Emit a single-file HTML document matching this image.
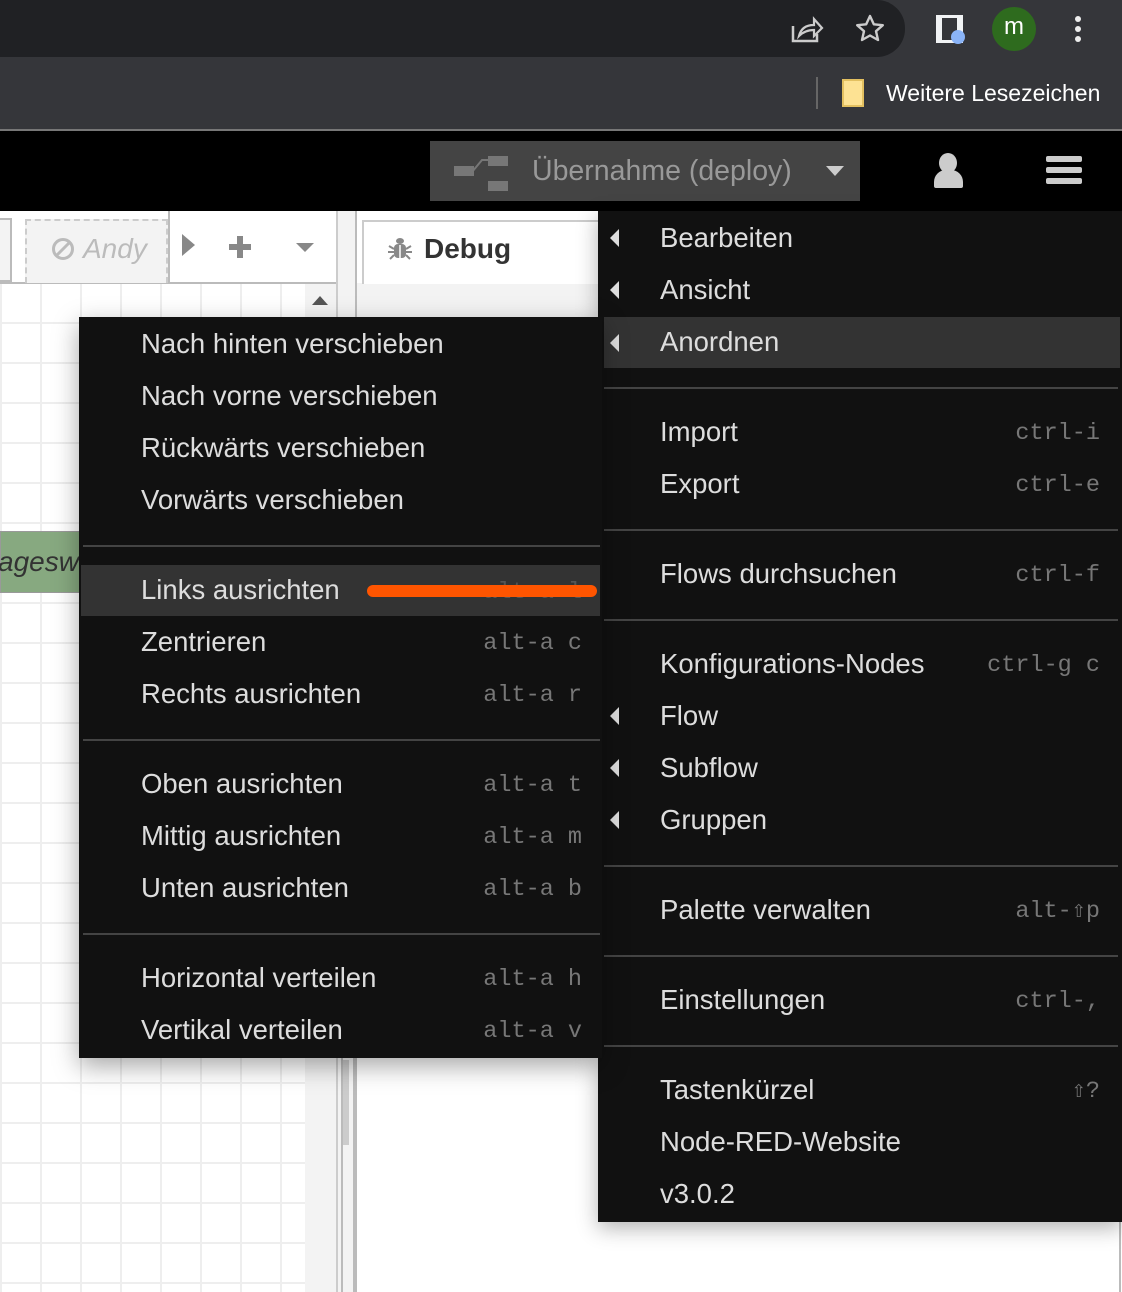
<!DOCTYPE html>
<html><head><meta charset="utf-8"><style>
*{margin:0;padding:0;box-sizing:border-box}
body{width:1122px;height:1292px;overflow:hidden;position:relative;background:#fff;font-family:"Liberation Sans",Arial,sans-serif}
.a{position:absolute}
.menu{position:absolute;background:#111;color:#ddd;font-size:27.5px}
.it{position:absolute;left:0;right:0;height:52px;line-height:52px}
.it .t{position:absolute}
.it .k{position:absolute;top:2px;font-family:"Liberation Mono","DejaVu Sans Mono",monospace;font-size:23.5px;color:#777}
.sep{position:absolute;height:2px;background:#444}
.arr{position:absolute;width:0;height:0;border-top:9px solid transparent;border-bottom:9px solid transparent;border-right:9px solid #ddd;top:17px}
</style></head><body>
<!-- chrome -->
<div class="a" style="left:0;top:0;width:1122px;height:129px;background:#35363a"></div>
<div class="a" style="left:-30px;top:0;width:935px;height:57px;background:#202124;border-radius:0 28px 28px 0"></div>
<svg class="a" style="left:790px;top:14px" width="34" height="30" viewBox="0 0 34 30"><path d="M3 12v15h24v-7" fill="none" stroke="#ccc" stroke-width="2.5"/><path d="M9 22c2-8 8-11 15-11v-6l8 9-8 8v-6c-6 0-11 2-15 6z" fill="none" stroke="#ccc" stroke-width="2.2"/></svg>
<svg class="a" style="left:855px;top:14px" width="30" height="30" viewBox="0 0 30 30"><path d="M15 2l3.8 8.3 9 .9-6.8 6 2 8.8L15 21.5 7 26l2-8.8-6.8-6 9-.9z" fill="none" stroke="#ccc" stroke-width="2.4" stroke-linejoin="round"/></svg>
<div class="a" style="left:936px;top:15px;width:27px;height:28px;background:#f1f3f4"></div>
<div class="a" style="left:942px;top:18px;width:15px;height:22px;background:#35363a"></div>
<div class="a" style="left:951px;top:30px;width:14px;height:14px;border-radius:50%;background:#8ab4f8"></div>
<div class="a" style="left:992px;top:7px;width:44px;height:44px;border-radius:50%;background:#2e6b1e;color:#fff;font-size:24px;text-align:center;line-height:40px">m</div>
<div class="a" style="left:1075px;top:16px;width:6px;height:6px;border-radius:50%;background:#eee;box-shadow:0 10px 0 #eee,0 20px 0 #eee"></div>
<div class="a" style="left:816px;top:77px;width:2px;height:32px;background:#666"></div>
<div class="a" style="left:842px;top:79px;width:22px;height:28px;background:#fde293;border:2px solid #e3c060"></div>
<div class="a" style="left:886px;top:78px;color:#fff;font-size:23px;line-height:30px">Weitere Lesezeichen</div>
<div class="a" style="left:0;top:129px;width:1122px;height:2px;background:#777"></div>
<!-- node-red header -->
<div class="a" style="left:0;top:131px;width:1122px;height:80px;background:#000"></div>
<div class="a" style="left:430px;top:141px;width:430px;height:60px;background:#444"></div>
<div class="a" style="left:454px;top:166px;width:20px;height:10px;background:#777"></div>
<div class="a" style="left:488px;top:156px;width:20px;height:10px;background:#777"></div>
<div class="a" style="left:488px;top:181px;width:20px;height:10px;background:#777"></div>
<svg class="a" style="left:470px;top:158px" width="20" height="20"><path d="M2 14L12 2h6" stroke="#777" stroke-width="2" fill="none"/></svg>
<div class="a" style="left:532px;top:154px;color:#999;font-size:28.5px;line-height:34px">Übernahme (deploy)</div>
<div class="a" style="left:826px;top:166px;border-left:9px solid transparent;border-right:9px solid transparent;border-top:10px solid #ccc"></div>
<div class="a" style="left:939px;top:153px;width:18px;height:20px;border-radius:50%;background:#ccc"></div>
<div class="a" style="left:934px;top:170px;width:29px;height:18px;border-radius:12px 12px 2px 2px;background:#ccc"></div>
<div class="a" style="left:1046px;top:156px;width:36px;height:6px;background:#ccc;border-radius:2px;box-shadow:0 11px 0 #ccc,0 22px 0 #ccc"></div>
<!-- workspace -->
<div class="a" style="left:0;top:211px;width:338px;height:1081px;background:#fff"></div>
<div class="a" style="left:0;top:283px;width:305px;height:1009px;background-color:#fff;background-image:linear-gradient(#eee 2px,transparent 2px),linear-gradient(90deg,#eee 2px,transparent 2px);background-size:40px 40px;background-position:0 -1px"></div>
<div class="a" style="left:0;top:282px;width:338px;height:2px;background:#bbb"></div>
<div class="a" style="left:0;top:218px;width:12px;height:64px;border:2px solid #bbb;border-left:none;background:#f3f3f3"></div>
<div class="a" style="left:25px;top:219px;width:143px;height:64px;border:2px dashed #ccc;border-bottom:none;background:#f3f3f3"></div>
<svg class="a" style="left:51px;top:237px" width="24" height="24"><circle cx="12" cy="12" r="9.5" fill="none" stroke="#bbb" stroke-width="3"/><path d="M6 18L18 6" stroke="#bbb" stroke-width="3"/></svg>
<div class="a" style="left:83px;top:232px;color:#bbb;font-size:28px;font-style:italic;line-height:34px">Andy</div>
<div class="a" style="left:168px;top:211px;width:2px;height:72px;background:#bbb"></div>
<div class="a" style="left:182px;top:234px;border-top:11px solid transparent;border-bottom:11px solid transparent;border-left:13px solid #888"></div>
<div class="a" style="left:229px;top:244px;width:22px;height:6px;background:#888"></div>
<div class="a" style="left:237px;top:236px;width:6px;height:22px;background:#888"></div>
<div class="a" style="left:296px;top:243px;border-left:9px solid transparent;border-right:9px solid transparent;border-top:9px solid #888"></div>
<div class="a" style="left:305px;top:284px;width:32px;height:1008px;background:#f3f3f3"></div>
<div class="a" style="left:312px;top:296px;border-left:8px solid transparent;border-right:8px solid transparent;border-bottom:9px solid #555"></div>
<div class="a" style="left:336px;top:211px;width:2px;height:1081px;background:#ccc"></div>
<div class="a" style="left:338px;top:211px;width:17px;height:1081px;background:#f3f3f3"></div>
<div class="a" style="left:341px;top:1040px;width:14px;height:252px;border-left:2px solid #bbb;border-right:2px solid #bbb"></div>
<div class="a" style="left:343px;top:1060px;width:6px;height:85px;background:#ccc"></div>
<div class="a" style="left:355px;top:211px;width:767px;height:1081px;background:#fff;border-left:2px solid #bbb"></div>
<div class="a" style="left:1119px;top:1222px;width:2px;height:70px;background:#bbb"></div>
<div class="a" style="left:357px;top:283px;width:241px;height:34px;background:#f3f3f3"></div>
<div class="a" style="left:362px;top:220px;width:240px;height:64px;border:2px solid #ccc;border-right:none;border-bottom:none;background:#fff"></div>
<svg class="a" style="left:387px;top:236px" width="26" height="26" viewBox="0 0 26 26"><g fill="#888"><ellipse cx="13" cy="5" rx="4" ry="3"/><rect x="7" y="8" width="12" height="14" rx="4"/></g><g stroke="#888" stroke-width="2"><path d="M2 10l5 3M24 10l-5 3M1 16h6M25 16h-6M3 23l4-4M23 23l-4-4"/></g><path d="M13 9v13" stroke="#fff" stroke-width="1.5"/></svg>
<div class="a" style="left:424px;top:232px;color:#333;font-size:28px;font-weight:bold;line-height:34px">Debug</div>
<div class="a" style="left:0;top:531px;width:80px;height:62px;background:#87a980;border:1px solid #999"></div>
<div class="a" style="left:-2px;top:545px;color:#333;font-size:28px;font-style:italic;line-height:34px">agesw</div>
<!-- main menu -->
<div class="menu" style="left:598px;top:211px;width:524px;height:1011px;box-shadow:0 6px 20px rgba(0,0,0,.3)">
<div class="it" style="top:1px"><i class="arr" style="left:12px"></i><span class="t" style="left:62px">Bearbeiten</span></div>
<div class="it" style="top:53px"><i class="arr" style="left:12px"></i><span class="t" style="left:62px">Ansicht</span></div>
<div class="it" style="top:106px;left:6px;right:2px;height:51px;background:#333"><i class="arr" style="left:6px"></i><span class="t" style="left:56px;top:-1px">Anordnen</span></div>
<div class="sep" style="top:176px;left:6px;right:4px"></div>
<div class="it" style="top:195px"><span class="t" style="left:62px">Import</span><span class="k" style="right:22px">ctrl-i</span></div>
<div class="it" style="top:247px"><span class="t" style="left:62px">Export</span><span class="k" style="right:22px">ctrl-e</span></div>
<div class="sep" style="top:318px;left:6px;right:4px"></div>
<div class="it" style="top:337px"><span class="t" style="left:62px">Flows durchsuchen</span><span class="k" style="right:22px">ctrl-f</span></div>
<div class="sep" style="top:408px;left:6px;right:4px"></div>
<div class="it" style="top:427px"><span class="t" style="left:62px">Konfigurations-Nodes</span><span class="k" style="right:22px">ctrl-g c</span></div>
<div class="it" style="top:479px"><i class="arr" style="left:12px"></i><span class="t" style="left:62px">Flow</span></div>
<div class="it" style="top:531px"><i class="arr" style="left:12px"></i><span class="t" style="left:62px">Subflow</span></div>
<div class="it" style="top:583px"><i class="arr" style="left:12px"></i><span class="t" style="left:62px">Gruppen</span></div>
<div class="sep" style="top:654px;left:6px;right:4px"></div>
<div class="it" style="top:673px"><span class="t" style="left:62px">Palette verwalten</span><span class="k" style="right:22px">alt-⇧p</span></div>
<div class="sep" style="top:744px;left:6px;right:4px"></div>
<div class="it" style="top:763px"><span class="t" style="left:62px">Einstellungen</span><span class="k" style="right:22px">ctrl-,</span></div>
<div class="sep" style="top:834px;left:6px;right:4px"></div>
<div class="it" style="top:853px"><span class="t" style="left:62px">Tastenkürzel</span><span class="k" style="right:22px">⇧?</span></div>
<div class="it" style="top:905px"><span class="t" style="left:62px">Node-RED-Website</span></div>
<div class="it" style="top:957px"><span class="t" style="left:62px">v3.0.2</span></div>
</div>
<!-- submenu -->
<div class="menu" style="left:79px;top:317px;width:523px;height:741px;box-shadow:0 8px 24px rgba(0,0,0,.35)">
<div class="it" style="top:1px"><span class="t" style="left:62px">Nach hinten verschieben</span></div>
<div class="it" style="top:53px"><span class="t" style="left:62px">Nach vorne verschieben</span></div>
<div class="it" style="top:105px"><span class="t" style="left:62px">Rückwärts verschieben</span></div>
<div class="it" style="top:157px"><span class="t" style="left:62px">Vorwärts verschieben</span></div>
<div class="sep" style="top:228px;left:4px;right:2px"></div>
<div class="it" style="top:248px;left:2px;right:2px;height:51px;background:#333"><span class="t" style="left:60px;top:-1px">Links ausrichten</span><span class="k" style="right:18px;color:#555">alt-a l</span></div>
<div class="a" style="left:288px;top:268px;width:230px;height:12px;border-radius:6px;background:#ff5500"></div>
<div class="it" style="top:299px"><span class="t" style="left:62px">Zentrieren</span><span class="k" style="right:20px">alt-a c</span></div>
<div class="it" style="top:351px"><span class="t" style="left:62px">Rechts ausrichten</span><span class="k" style="right:20px">alt-a r</span></div>
<div class="sep" style="top:422px;left:4px;right:2px"></div>
<div class="it" style="top:441px"><span class="t" style="left:62px">Oben ausrichten</span><span class="k" style="right:20px">alt-a t</span></div>
<div class="it" style="top:493px"><span class="t" style="left:62px">Mittig ausrichten</span><span class="k" style="right:20px">alt-a m</span></div>
<div class="it" style="top:545px"><span class="t" style="left:62px">Unten ausrichten</span><span class="k" style="right:20px">alt-a b</span></div>
<div class="sep" style="top:616px;left:4px;right:2px"></div>
<div class="it" style="top:635px"><span class="t" style="left:62px">Horizontal verteilen</span><span class="k" style="right:20px">alt-a h</span></div>
<div class="it" style="top:687px"><span class="t" style="left:62px">Vertikal verteilen</span><span class="k" style="right:20px">alt-a v</span></div>
</div>
</body></html>
